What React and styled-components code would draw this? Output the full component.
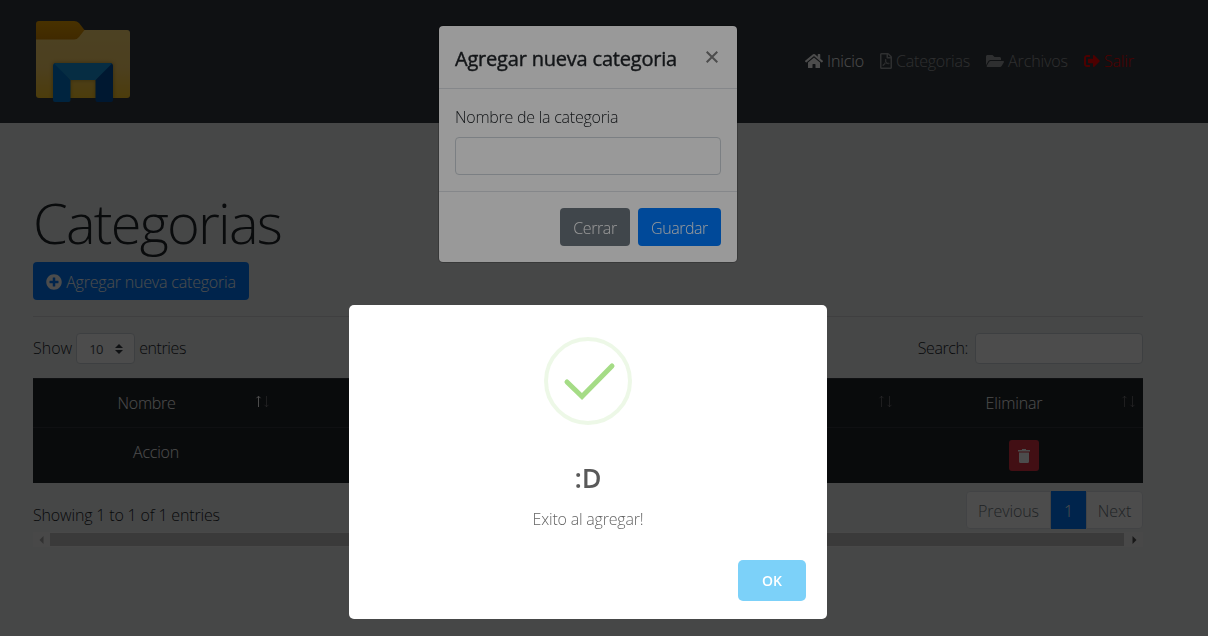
import React from 'react';
import styled, { createGlobalStyle } from 'styled-components';
import { FaHome, FaRegFilePdf, FaFolderOpen, FaSignOutAlt, FaPlusCircle } from 'react-icons/fa';

const Global = createGlobalStyle`
  *, *::before, *::after { box-sizing: border-box; }
  html, body { margin: 0; height: 100%; overflow: hidden; }
  body {
    background: #ebedef; color: #212529;
    font-family: "Open Sans", "Noto Sans", sans-serif;
    font-size: 16px; font-weight: 300; line-height: 24px;
  }
  h1, h2, h5, p { margin: 0; }
  button, input { font: inherit; }
`;

const T = styled.span`
  display: inline-block;
  white-space: nowrap;
  letter-spacing: ${p => p.$ls || 0}px;
`;

const Navbar = styled.nav`
  height: 123px; background: #343a40; padding: 0 74px 2px 33px;
  display: flex; justify-content: space-between; align-items: center;
`;
const Logo = styled.svg`display: block; width: 100px; height: 90px;`;
const NavList = styled.div`display: flex; gap: 16px;`;
const NavItem = styled.a`
  display: flex; align-items: center; gap: 4px; width: ${p => p.$w}px;
  color: ${p => p.$color}; white-space: nowrap;
  svg { flex: none; height: 16px; width: ${p => p.$iw}px; }
`;

const Page = styled.main`
  width: 1143px; padding: 66px 0 0 33px;
`;
const Title = styled.h1`
  font-size: 56px; line-height: 67px; font-weight: 300; margin-bottom: 6px; height: 67px;
`;
const Button = styled.button`
  height: 38px; border: 0; border-radius: 4px; width: ${p => p.$w}px; padding: 1px 0 0;
  display: flex; align-items: center; justify-content: center; gap: 4px;
  color: #fff; background: ${p => p.$bg};
`;
const Rule = styled.hr`
  margin: 16px 0; border: 0; border-top: 1px solid rgba(0,0,0,.1);
`;
const Controls = styled.div`
  display: flex; justify-content: space-between; height: 45px; align-items: flex-start;
`;
const Control = styled.label`
  display: flex; align-items: center; height: 31px; gap: ${p => p.$gap}px;
  ${T} { padding-bottom: 2px; }
`;
const Select = styled.span`
  width: 59px; height: 31px; border: 1px solid #ced4da; border-radius: 4px; background: #fff;
  display: flex; align-items: center; justify-content: space-between; padding: 0 11px 0 12px;
  font-size: 13px; font-weight: 400; color: #495057; letter-spacing: -.5px;
`;
const Input = styled.input`
  display: block; width: ${p => p.$w}px; height: ${p => p.$h}px; background: #fff;
  border: 1px solid #ced4da; border-radius: 4px; padding: 0; outline: 0;
`;

const Table = styled.div`background: #212529; color: #fff; height: 105px;`;
const Row = styled.div`
  display: grid; grid-template-columns: 245px 311px 311px 243px; height: ${p => p.$h}px;
  border-top: 1px solid #32383e;
`;
const Cell = styled.div`
  display: flex; justify-content: center; padding-top: ${p => p.$pt || 12}px;
  padding-right: ${p => p.$pr || 0}px; padding-left: ${p => p.$pl || 0}px; position: relative;
`;
const Sort = styled.svg`
  position: absolute; right: ${p => p.$r || 8}px; top: 16px; width: 14px; height: 14px;
`;
const DeleteButton = styled.button`
  width: 30px; height: 31px; border: 0; border-radius: 3px; background: #dc3545; padding: 0;
  display: flex; align-items: center; justify-content: center;
`;
const Footer = styled.div`
  display: flex; justify-content: space-between; padding-top: 8px; height: 49px;
`;
const Info = styled.div`padding-top: 12px;`;
const Pager = styled.div`
  display: flex; height: 38px; border-radius: 4px; width: 177px;
`;
const PageLink = styled.span`
  display: flex; align-items: center; justify-content: center; width: ${p => p.$w}px; padding-top: 1px;
  color: ${p => (p.$active ? '#fff' : '#6c757d')};
  background: ${p => (p.$active ? '#007bff' : '#fff')};
  border: 1px solid ${p => (p.$active ? '#007bff' : '#dee2e6')};
  border-radius: ${p => p.$radius || 0};
`;
const Scrollbar = styled.div`
  height: 15px; background: #f1f1f1; display: flex; align-items: center; justify-content: space-between;
  padding: 0 6px;
  svg { width: 5px; height: 8px; display: block; }
`;
const Thumb = styled.div`width: 1074px; height: 13px; background: #c1c1c1; margin-right: 2px;`;

const Backdrop = styled.div`
  position: fixed; inset: 0; background: rgba(0,0,0,${p => p.$alpha});
  display: flex; justify-content: center; align-items: flex-start;
  padding: ${p => p.$top}px 32px 0 0;
`;
const Dialog = styled.section`
  width: 300px; height: 238px; background: #fff; border: 1px solid rgba(0,0,0,.2);
  background-clip: padding-box; border-radius: 5px; display: flex; flex-direction: column;
`;
const DialogHead = styled.header`
  height: 63px; border-bottom: 1px solid #dee2e6; padding: 18px 19px 0 16px;
  display: flex; justify-content: space-between;
`;
const DialogTitle = styled.h5`font-size: 20px; line-height: 30px; font-weight: 500; -webkit-text-stroke: .4px currentColor;`;
const Close = styled.svg`width: 12px; height: 12px; margin-top: 7px;`;
const DialogBody = styled.div`height: 103px; padding: 16px; border-bottom: 1px solid #dee2e6;`;
const FieldLabel = styled.div`height: 32px;`;
const DialogFoot = styled.footer`
  display: flex; justify-content: flex-end; gap: 8px; padding: 16px;
`;

const Alert = styled.section`
  width: 478px; height: 314px; background: #fff; border-radius: 5px; padding: 32px 21px 0;
  display: flex; flex-direction: column; align-items: center;
`;
const Check = styled.svg`width: 88px; height: 88px; flex: none;`;
const AlertTitle = styled.h2`
  margin-top: 35px; height: 36px; font-size: 27px; line-height: 36px; font-weight: 600; color: rgba(0,0,0,.65);
`;
const AlertText = styled.p`margin-top: 11px; color: rgba(0,0,0,.64); height: 24px;`;
const OkButton = styled.button`
  align-self: flex-end; margin-top: 29px; width: 68px; height: 41px; border: 0; border-radius: 5px;
  background: #7cd1f9; color: #fff; font-size: 14px; font-weight: 600; padding: 0;
`;

function SortArrows({ asc, r }) {
  return (
    <Sort viewBox="0 0 14 14" $r={r} fill="none" stroke="#fff">
      <path d="M3.5 12V1.5M1.5 3.2L3.5 1.2L5.5 3.2" opacity={asc ? 1 : 0.3} />
      <path d="M11.5 1V11.5M9.5 9.8L11.5 11.8L13.5 9.8" opacity=".3" />
    </Sort>
  );
}

function FolderLogo() {
  return (
    <Logo viewBox="33 16 100 90">
      <defs>
        <linearGradient id="body" x1="0" y1="0" x2="0" y2="1">
          <stop offset="0" stopColor="#ffdb75" /><stop offset=".55" stopColor="#ffd468" /><stop offset="1" stopColor="#ffca28" />
        </linearGradient>
        <linearGradient id="tab" x1="0" y1="0" x2="0" y2="1">
          <stop offset="0" stopColor="#f0a500" /><stop offset="1" stopColor="#d68a00" />
        </linearGradient>
        <filter id="glow" x="-20%" y="-20%" width="140%" height="140%"><feGaussianBlur stdDeviation="2" /></filter>
        <clipPath id="folder"><path d="M36 28H130V98H36Z" /></clipPath>
      </defs>
      <path d="M36 30H127Q130 30 130 33V95Q130 98 127 98H39Q36 98 36 95Z" fill="url(#body)" />
      <path d="M36 24Q36 21 39 21H74Q77 21 79 23L84.500 30L79 37Q77 39.500 74 39.500H36Z" fill="url(#tab)" />
      <g clipPath="url(#folder)">
        <path d="M53 63H113V102H96V80H70V102H53Z" fill="#7a5a10" opacity=".55" filter="url(#glow)" />
      </g>
      <path d="M53 66Q53 63 56 63L70.500 80V100Q70.500 102 68.500 102H55Q53 102 53 100Z" fill="#007bd4" />
      <path d="M113 66Q113 63 110 63L95.500 80V100Q95.500 102 97.500 102H111Q113 102 113 100Z" fill="#0053a6" />
      <path d="M54.200 63.800Q55 63 56 63H110Q111 63 111.800 63.800L95.500 80H70.500Z" fill="#1498e0" />
    </Logo>
  );
}

export default function App() {
  return (
    <>
      <Global />
      <Navbar>
        <FolderLogo />
        <NavList>
          <NavItem $w={59} $iw={18} $color="#fff"><FaHome /><T $ls={-0.1}>Inicio</T></NavItem>
          <NavItem $w={90} $iw={12} $color="rgba(255,255,255,.5)"><FaRegFilePdf /><T $ls={-0.2}>Categorias</T></NavItem>
          <NavItem $w={82} $iw={18} $color="rgba(255,255,255,.5)"><FaFolderOpen /><T $ls={-0.1}>Archivos</T></NavItem>
          <NavItem $w={50} $iw={16} $color="#f00"><FaSignOutAlt /><T $ls={-0.2}>Salir</T></NavItem>
        </NavList>
      </Navbar>
      <Page>
        <Title><T $ls={-1.8}>Categorias</T></Title>
        <Button $w={216} $bg="#007bff"><FaPlusCircle /><T $ls={-0.19}>Agregar nueva categoria</T></Button>
        <Rule />
        <Controls>
          <Control $gap={4}>
            <T>Show</T>
            <Select>
              10
              <svg width="8" height="10" viewBox="0 0 8 10" fill="#343a40"><path d="M0 4L4 0L8 4ZM0 6L4 10L8 6Z" /></svg>
            </Select>
            <T $ls={-0.4}>entries</T>
          </Control>
          <Control $gap={7}><T $ls={-0.4}>Search:</T><Input $w={168} $h={31} /></Control>
        </Controls>
        <Table>
          <Row $h={49}>
            <Cell $pr={18}><T $ls={-0.3}>Nombre</T><SortArrows asc r={9} /></Cell>
            <Cell $pr={18}><T>Editar</T><SortArrows /></Cell>
            <Cell><SortArrows r={8} /></Cell>
            <Cell $pr={15}><T $ls={-0.15}>Eliminar</T><SortArrows /></Cell>
          </Row>
          <Row $h={56}>
            <Cell $pl={1}><T $ls={-0.2}>Accion</T></Cell>
            <Cell /><Cell />
            <Cell $pl={4}>
              <DeleteButton aria-label="Eliminar">
                <svg width="12" height="14" viewBox="0 0 12 14" fill="#fff"><path d="M0 1H4V0H8V1H12V2.500H0ZM1 3.500H11V12.500Q11 14 9.500 14H2.500Q1 14 1 12.500Z" /></svg>
              </DeleteButton>
            </Cell>
          </Row>
        </Table>
        <Footer>
          <Info><T $ls={-0.17}>Showing 1 to 1 of 1 entries</T></Info>
          <Pager>
            <PageLink $w={85} $radius="4px 0 0 4px"><T $ls={-0.1}>Previous</T></PageLink>
            <PageLink $w={35} $active>1</PageLink>
            <PageLink $w={57} $radius="0 4px 4px 0"><T>Next</T></PageLink>
          </Pager>
        </Footer>
        <Scrollbar>
          <svg viewBox="0 0 4 8" fill="#a3a3a3"><path d="M4 0V8L0 4Z" /></svg>
          <Thumb />
          <svg viewBox="0 0 4 8" fill="#505050"><path d="M0 0V8L4 4Z" /></svg>
        </Scrollbar>
      </Page>

      <Backdrop $alpha={0.5} $top={25}>
        <Dialog>
          <DialogHead>
            <DialogTitle><T $ls={-0.2}>Agregar nueva categoria</T></DialogTitle>
            <Close viewBox="0 0 12 12" stroke="#7f7f7f" strokeWidth="2"><path d="M.7 .7L11.300 11.300M11.300 .7L.7 11.300" /></Close>
          </DialogHead>
          <DialogBody>
            <FieldLabel><T $ls={-0.25}>Nombre de la categoria</T></FieldLabel>
            <Input $w={266} $h={38} />
          </DialogBody>
          <DialogFoot>
            <Button $w={70} $bg="#6c757d"><T $ls={-0.4}>Cerrar</T></Button>
            <Button $w={83} $bg="#007bff"><T $ls={-0.45}>Guardar</T></Button>
          </DialogFoot>
        </Dialog>
      </Backdrop>

      <Backdrop $alpha={0.4} $top={305}>
        <Alert>
          <Check viewBox="0 0 88 88" fill="none">
            <circle cx="44" cy="44" r="42" stroke="#a5dc86" strokeOpacity=".2" strokeWidth="4" />
            <path d="M23 45L38 59.500L68 29" stroke="#a5dc86" strokeWidth="5" strokeLinecap="round" />
          </Check>
          <AlertTitle><T>:D</T></AlertTitle>
          <AlertText><T $ls={-0.2}>Exito al agregar!</T></AlertText>
          <OkButton><T>OK</T></OkButton>
        </Alert>
      </Backdrop>
    </>
  );
}
